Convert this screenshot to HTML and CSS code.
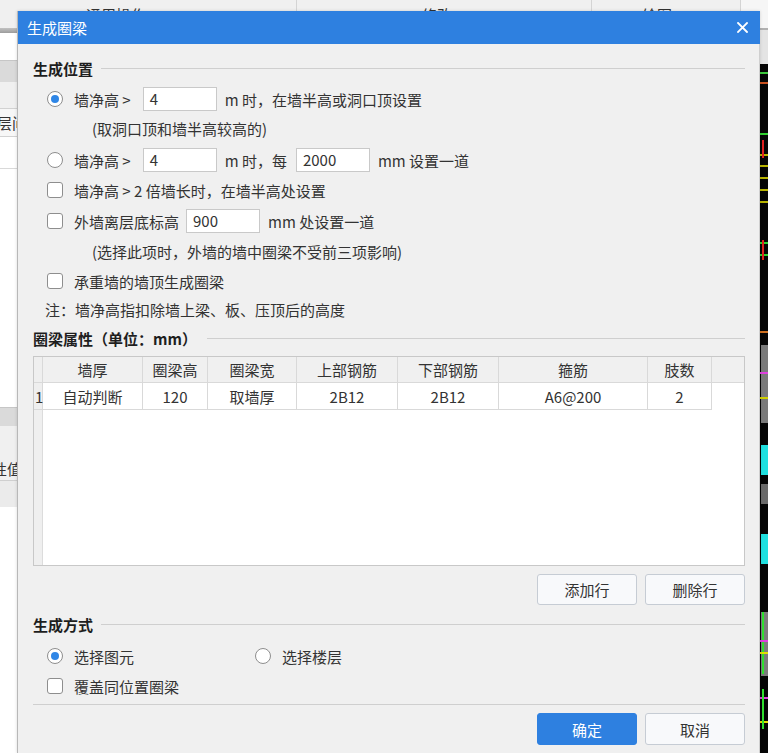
FILE: index.html
```html
<!DOCTYPE html>
<html lang="zh-CN">
<head>
<meta charset="utf-8">
<title>生成圈梁</title>
<link rel="stylesheet" href="styles.css">
</head>
<body>
<div class="app">
  <div class="toolbar">
    <div class="tb-seg seg1"><span>通用操作</span></div>
    <div class="tb-seg seg2"><span>修改</span></div>
    <div class="tb-seg seg3"><span>绘图</span></div>
    <div class="tb-seg seg4"></div>
  </div>
  <div class="workarea">
    <div class="leftpanel">
      <div class="lp-band"></div>
      <div class="lp-white h27"></div>
      <div class="lp-head h22"></div>
      <div class="lp-light h26"></div>
      <div class="lp-row"><span class="lp-text t1">层间距</span></div>
      <div class="lp-white h32 bb"></div>
      <div class="lp-white h238"></div>
      <div class="lp-head h19"></div>
      <div class="lp-props"><span class="lp-text t2">属性值</span></div>
      <div class="lp-gray"></div>
      <div class="lp-white grow"></div>
    </div>
    <div class="canvas-col">
      <div class="cv-top"></div>
      <div class="cv-black">
        <i class="ln" style="top:8px;background:#3cc83c"></i>
        <i class="ln" style="top:18px;background:#c8501e"></i>
        <i class="ln" style="top:69px;background:#2fd12f"></i>
        <i class="ln" style="top:90px;background:#b8b400"></i>
        <i class="ln" style="top:101px;background:#b8b400"></i>
        <i class="ln" style="top:113px;background:#b8b400"></i>
        <i class="ln" style="top:125px;background:#b8b400"></i>
        <i class="ln" style="top:137px;background:#b8b400"></i>
        <i class="vl" style="top:76px;height:18px;background:#e02020"></i>
        <i class="ln" style="top:178px;background:#2fd12f"></i>
        <i class="ln" style="top:190px;background:#2fd12f"></i>
        <i class="vl" style="top:176px;height:20px;background:#e02020"></i>
        <i class="ln" style="top:267px;background:#d07020"></i>
        <i class="blk" style="top:281px;height:78px;background:#7a7a7a"></i>
        <i class="ln" style="top:308px;background:#e040e0"></i>
        <i class="ln" style="top:333px;background:#d0d000"></i>
        <i class="blk" style="top:381px;height:30px;background:#20e0e0"></i>
        <i class="blk" style="top:420px;height:20px;background:#6a6a6a"></i>
        <i class="blk" style="top:470px;height:30px;background:#20e0e0"></i>
        <i class="blk" style="top:548px;height:64px;background:#7c7c7c"></i>
        <i class="vl" style="top:548px;height:62px;background:#2fe02f"></i>
        <i class="ln" style="top:576px;background:#e040e0"></i>
        <i class="ln" style="top:588px;background:#e0e000"></i>
        <i class="ln" style="top:633px;background:#e040e0"></i>
        <i class="ln" style="top:657px;background:#e0e000"></i>
        <i class="vl" style="top:625px;height:40px;background:#2fe02f"></i>
      </div>
    </div>
  </div>
</div>

<div class="dialog">
  <div class="titlebar">
    <span class="title">生成圈梁</span>
    <svg class="close" width="11" height="11" viewBox="0 0 11 11"><path d="M1 1L10 10M10 1L1 10" stroke="#fff" stroke-width="1.8" stroke-linecap="square"/></svg>
  </div>
  <div class="dlg-body">
    <div class="section-title"><span>生成位置</span></div>

    <div class="opt mt7">
      <span class="radio checked"></span>
      <span>墙净高 &gt;</span>
      <span class="input w74 ml12">4</span>
      <span class="ml8">m 时，在墙半高或洞口顶设置</span>
    </div>
    <div class="note mt6">(取洞口顶和墙半高较高的)</div>

    <div class="opt mt7">
      <span class="radio"></span>
      <span>墙净高 &gt;</span>
      <span class="input w74 ml12">4</span>
      <span class="ml8">m 时，每</span>
      <span class="input w74 ml9">2000</span>
      <span class="ml8">mm 设置一道</span>
    </div>

    <div class="opt mt6">
      <span class="check"></span>
      <span>墙净高 &gt; 2 倍墙长时，在墙半高处设置</span>
    </div>

    <div class="opt mt7">
      <span class="check"></span>
      <span>外墙离层底标高</span>
      <span class="input w74 ml7">900</span>
      <span class="ml8">mm 处设置一道</span>
    </div>
    <div class="note mt7">(选择此项时，外墙的墙中圈梁不受前三项影响)</div>

    <div class="opt mt5">
      <span class="check"></span>
      <span>承重墙的墙顶生成圈梁</span>
    </div>

    <div class="remark mt5">注：墙净高指扣除墙上梁、板、压顶后的高度</div>

    <div class="section-title mt4 gap9"><span>圈梁属性（单位：mm）</span></div>

    <div class="grid-table">
      <div class="trow thead">
        <div class="cell rn"></div>
        <div class="cell">墙厚</div>
        <div class="cell">圈梁高</div>
        <div class="cell">圈梁宽</div>
        <div class="cell">上部钢筋</div>
        <div class="cell">下部钢筋</div>
        <div class="cell">箍筋</div>
        <div class="cell">肢数</div>
        <div class="cell filler"></div>
      </div>
      <div class="trow tdata">
        <div class="cell rn">1</div>
        <div class="cell">自动判断</div>
        <div class="cell">120</div>
        <div class="cell">取墙厚</div>
        <div class="cell">2B12</div>
        <div class="cell">2B12</div>
        <div class="cell">A6@200</div>
        <div class="cell">2</div>
        <div class="cell filler"></div>
      </div>
    </div>

    <div class="btnrow mt8">
      <button class="btn">添加行</button>
      <button class="btn">删除行</button>
    </div>

    <div class="section-title mt7"><span>生成方式</span></div>

    <div class="opt mt8">
      <div class="group">
        <span class="radio checked"></span>
        <span>选择图元</span>
      </div>
      <span class="radio"></span>
      <span>选择楼层</span>
    </div>

    <div class="opt mt6">
      <span class="check"></span>
      <span>覆盖同位置圈梁</span>
    </div>

    <div class="sep"></div>

    <div class="btnrow footer">
      <button class="btn primary">确定</button>
      <button class="btn">取消</button>
    </div>
  </div>
</div>
</body>
</html>
```

FILE: styles.css
```css
* { box-sizing: border-box; }
html, body { margin: 0; padding: 0; }
body {
  width: 768px;
  height: 753px;
  overflow: hidden;
  position: relative;
  font-family: "Noto Sans CJK SC", "Microsoft YaHei", sans-serif;
  font-size: 15px;
  color: #333;
  background: #fff;
}

/* ---------- background application ---------- */
.app { display: flex; flex-direction: column; height: 753px; }
.toolbar { height: 28px; flex: none; display: flex; background: #f0f0f0; }
.tb-seg {
  display: flex; align-items: center;
  border-right: 1px solid #d4d4d4;
  line-height: 1; color: #333;
}
.seg1 { width: 297px; padding-left: 86px; }
.seg2 { width: 295px; padding-left: 125px; }
.seg3 { width: 149px; padding-left: 50px; }
.seg4 { flex: 1; border-right: none; background: #f6f6f6; }

.workarea { flex: 1; display: grid; grid-template-columns: 760px 8px; }
.leftpanel { display: flex; flex-direction: column; overflow: hidden; }
.lp-band { height: 5px; background: linear-gradient(#c2c2c2, #9c9c9c); }
.lp-white { background: #fff; }
.h27 { height: 27px; }
.h22 { height: 22px; }
.h26 { height: 26px; }
.h32 { height: 32px; }
.h238 { height: 238px; }
.h19 { height: 19px; }
.bb { border-bottom: 1px solid #d9d9d9; }
.grow { flex: 1; }
.lp-head { background: #dadada; border-top: 1px solid #c6c6c6; }
.lp-light { background: #f0f0f0; }
.lp-row {
  height: 29px; background: #f7f7f7;
  border-top: 1px solid #d2d2d2; border-bottom: 1px solid #d2d2d2;
  display: flex; align-items: center;
}
.lp-props {
  height: 54px; background: #f0f0f0;
  display: flex; align-items: flex-end; padding-bottom: 4px;
}
.lp-gray { height: 27px; background: #ebebeb; border-top: 1px solid #cfcfcf; }
.lp-text { white-space: nowrap; color: #333; line-height: 1; }
.t1 { margin-left: -3px; }
.t2 { margin-left: -23px; }

.canvas-col { display: flex; flex-direction: column; }
.cv-top { height: 36px; background: #e4e4e4; border-top: 2px solid #b0b0b0; }
.cv-black { flex: 1; background: #050505; position: relative; overflow: hidden; }
.ln { position: absolute; left: 0; right: 0; height: 2px; }
.vl { position: absolute; left: 2px; width: 2px; }
.blk { position: absolute; left: 1px; right: 0; }

/* ---------- dialog ---------- */
.dialog {
  position: absolute;
  left: 17px; top: 11px;
  width: 743px; height: 742px;
  background: #f0f0f0;
  border-left: 1px solid #b8b8b8;
  display: flex; flex-direction: column;
  box-shadow: 0 0 3px rgba(0,0,0,0.15);
}
.titlebar {
  height: 33px; flex: none;
  background: #2e80e0;
  color: #fff;
  display: flex; align-items: center; justify-content: space-between;
  padding: 0 12px 0 9px;
  font-size: 15px;
}
.close { display: block; }
.dlg-body {
  flex: 1;
  padding: 12px 14px 0 15px;
  border-right: 1px solid #cfcfcf;
  display: flex; flex-direction: column;
}

.section-title {
  height: 24px; flex: none;
  display: flex; align-items: center; gap: 8px;
  font-weight: bold; color: #1e1e1e;
  white-space: nowrap;
}
.section-title::after {
  content: ""; flex: 1; height: 1px; background: #cfcfcf;
}
.gap9 { gap: 10px; }

.opt {
  height: 24px; flex: none;
  display: flex; align-items: center;
  padding-left: 14px;
  white-space: nowrap;
}
.note { height: 24px; line-height: 24px; padding-left: 59px; flex: none; white-space: nowrap; }
.remark { height: 24px; line-height: 24px; padding-left: 12px; flex: none; white-space: nowrap; }

.radio {
  width: 16px; height: 16px; flex: none;
  border: 1px solid #8e8e8e; border-radius: 50%;
  background: #fff;
  margin-right: 11px;
  display: flex; align-items: center; justify-content: center;
}
.radio.checked::after {
  content: ""; width: 8px; height: 8px; border-radius: 50%;
  background: #2f86e6;
}
.check {
  width: 16px; height: 16px; flex: none;
  border: 1px solid #8e8e8e; border-radius: 3px;
  background: #fff;
  margin-right: 11px;
}
.input {
  height: 24px; flex: none;
  border: 1px solid #c9c9c9; background: #fff;
  padding-left: 6px; line-height: 22px;
  color: #333;
}
.w74 { width: 74px; }
.ml7 { margin-left: 7px; }
.ml8 { margin-left: 8px; }
.ml9 { margin-left: 9px; }
.ml12 { margin-left: 12px; }
.mt4 { margin-top: 4px; }
.mt5 { margin-top: 5px; }
.mt6 { margin-top: 6px; }
.mt7 { margin-top: 7px; }
.mt8 { margin-top: 8px; }

.group { display: flex; align-items: center; width: 208px; }

/* ---------- table ---------- */
.grid-table {
  margin-top: 6px;
  height: 210px; flex: none;
  border: 1px solid #c8c8c8;
  background: linear-gradient(to right, #efefef 8px, #dcdcdc 8px, #dcdcdc 9px, #fff 9px);
  display: flex; flex-direction: column;
}
.trow {
  display: grid;
  grid-template-columns: 9px 100px 65px 89px 101px 101px 149px 64px 1fr;
}
.cell {
  border-right: 1px solid #d9d9d9;
  border-bottom: 1px solid #d9d9d9;
  display: flex; align-items: center; justify-content: center;
  white-space: nowrap;
}
.thead .cell { height: 26px; background: #f0f0f0; }
.tdata .cell { height: 27px; background: #fff; }
.tdata .cell.rn { background: #efefef; justify-content: flex-start; padding-left: 1px; }
.thead .cell.rn { background: #efefef; }
.cell.filler { border-right: none; }
.tdata .cell.filler { border-bottom: none; background: #fff; }

/* ---------- buttons ---------- */
.btnrow { display: flex; justify-content: flex-end; gap: 8px; flex: none; }
.btn {
  width: 100px; height: 31px;
  font: inherit; color: #333;
  background: #f8f9fb;
  border: 1px solid #c6ccd4;
  border-radius: 3px;
  padding: 0;
}
.btn.primary { background: #2e80e0; border-color: #2e80e0; color: #fff; }
.footer { margin-top: 8px; }
.footer .btn { height: 32px; }

.sep { height: 1px; background: #cfcfcf; margin-top: 6px; flex: none; }
```
